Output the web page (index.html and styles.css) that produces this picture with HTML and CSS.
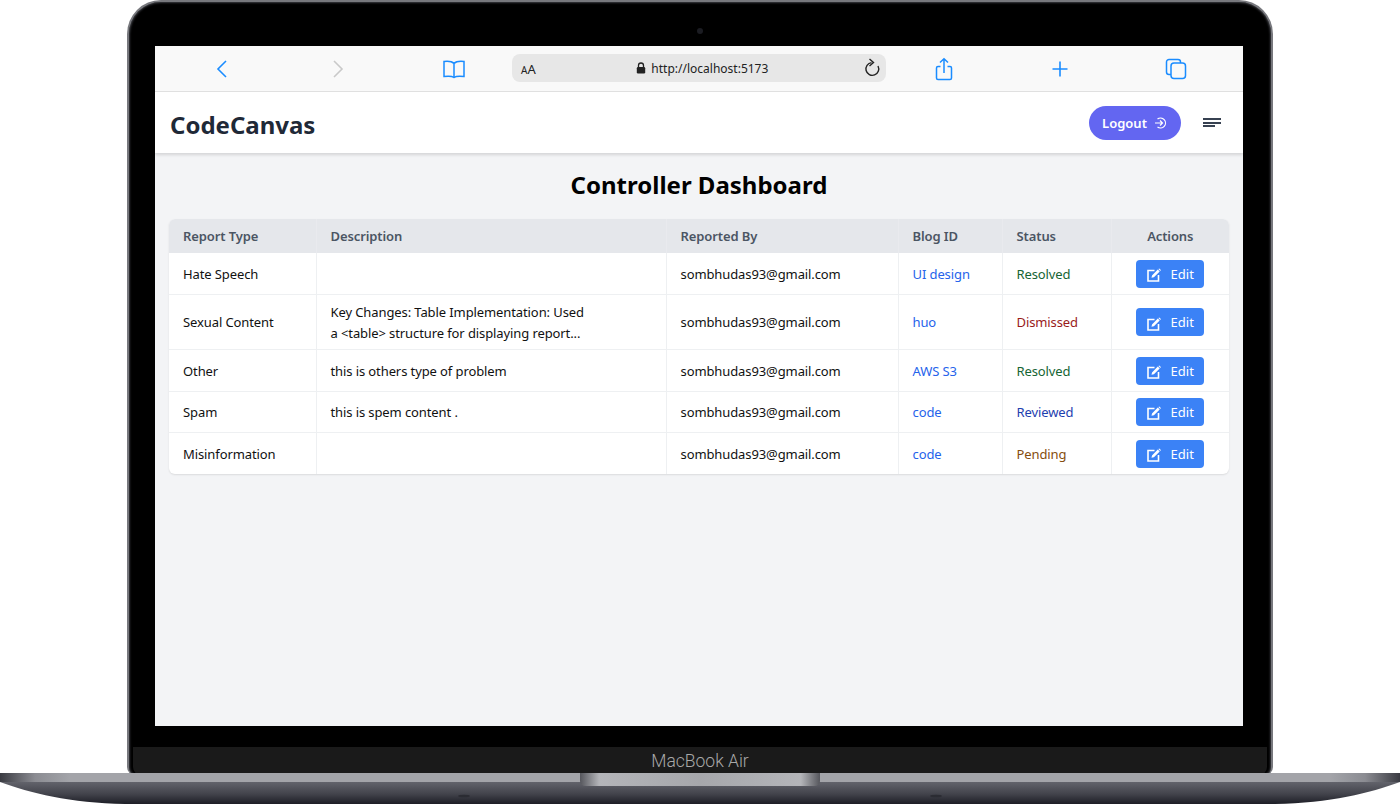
FILE: index.html
```html
<!DOCTYPE html>
<html lang="en">
  <head>
    <meta charset="UTF-8" />
    <meta name="viewport" content="width=device-width, initial-scale=1.0" />
    <title>Controller Dashboard</title>
    <link rel="stylesheet" href="styles.css">
  </head>
  <body>
    <div class="laptop">
      <div class="lid">
        <div class="camera"></div>
        <div class="chin">MacBook Air</div>
      </div>

      <svg class="base" width="1400" height="31" viewBox="0 0 1400 31">
        <defs>
          <linearGradient id="bodyGrad" x1="0" y1="0" x2="0" y2="1">
            <stop offset="0" stop-color="#62636b" />
            <stop offset="0.55" stop-color="#42434b" />
            <stop offset="1" stop-color="#1d1e26" />
          </linearGradient>
          <linearGradient id="bandGrad" x1="0" y1="0" x2="1" y2="0">
            <stop offset="0" stop-color="#3a3b42" />
            <stop offset="0.025" stop-color="#8b8c92" />
            <stop offset="0.05" stop-color="#a3a4a9" />
            <stop offset="0.95" stop-color="#a3a4a9" />
            <stop offset="0.975" stop-color="#8b8c92" />
            <stop offset="1" stop-color="#3a3b42" />
          </linearGradient>
          <linearGradient id="notchGrad" x1="0" y1="0" x2="1" y2="0">
            <stop offset="0" stop-color="#55565c" />
            <stop offset="0.08" stop-color="#b4b5b9" />
            <stop offset="0.5" stop-color="#a6a7ab" />
            <stop offset="0.92" stop-color="#b4b5b9" />
            <stop offset="1" stop-color="#55565c" />
          </linearGradient>
        </defs>
        <path d="M0 9 C30 20 70 30 125 31 L1275 31 C1330 30 1370 20 1400 9 Z" fill="url(#bodyGrad)" />
        <rect x="0" y="0" width="1400" height="9" fill="url(#bandGrad)" />
        <path d="M580 0 H820 V8 Q820 13 814 13 H586 Q580 13 580 8 Z" fill="url(#notchGrad)" />
        <ellipse cx="464" cy="23" rx="6" ry="1.3" fill="#2b2c33" />
        <ellipse cx="936" cy="23" rx="6" ry="1.3" fill="#2b2c33" />
      </svg>

      <div class="screen">
        <div class="toolbar">
          <div class="tool-slot">
            <svg width="24" height="24" viewBox="0 0 24 24" fill="none" stroke="#1a8cff" stroke-width="1.6"><path d="M16 4 L8 12 L16 20" /></svg>
          </div>
          <div class="tool-slot">
            <svg width="24" height="24" viewBox="0 0 24 24" fill="none" stroke="#c9c9c9" stroke-width="1.6"><path d="M8 4 L16 12 L8 20" /></svg>
          </div>
          <div class="tool-slot">
            <svg width="24" height="24" viewBox="0 0 24 24" fill="none" stroke="#1a8cff" stroke-width="1.5"><path d="M12 6.5 C10 4.5 6 4 2 4.5 V19.5 C6 19 10 19 12 20.5 C14 19 18 19 22 19.5 V4.5 C18 4 14 4.5 12 6.5 Z M12 6.5 V20.5" /></svg>
          </div>
          <div class="url-bar">
            <span class="aa"><small>A</small>A</span>
            <span class="url">
              <svg width="10" height="12" viewBox="0 0 10 12"><path d="M2.5 5 V3.5 a2.5 2.5 0 0 1 5 0 V5" fill="none" stroke="#222" stroke-width="1.3" /><rect x="0.8" y="5" width="8.4" height="6.5" rx="1.2" fill="#222" /></svg>
              http://localhost:5173
            </span>
            <svg class="reload" width="18" height="20" viewBox="0 0 18 20" fill="none" stroke="#222" stroke-width="1.4"><path d="M8.5 4.6 A6.4 6.4 0 1 0 15 8" /><path d="M6.5 1 L10.5 4.6 L6.5 8" /></svg>
          </div>
          <div class="tool-slot">
            <svg width="24" height="24" viewBox="0 0 24 24" fill="none" stroke="#1a8cff" stroke-width="1.5"><path d="M8.5 9.5 H6 a1.5 1.5 0 0 0 -1.5 1.5 V21 a1.5 1.5 0 0 0 1.5 1.5 H18 a1.5 1.5 0 0 0 1.5 -1.5 V11 a1.5 1.5 0 0 0 -1.5 -1.5 H15.5" /><path d="M12 16 V2 M8 5.5 L12 1.8 L16 5.5" /></svg>
          </div>
          <div class="tool-slot">
            <svg width="24" height="24" viewBox="0 0 24 24" fill="none" stroke="#1a8cff" stroke-width="1.6"><path d="M12 4.5 V19.5 M4.5 12 H19.5" /></svg>
          </div>
          <div class="tool-slot">
            <svg width="24" height="24" viewBox="0 0 24 24" fill="none" stroke="#1a8cff" stroke-width="1.5"><path d="M7 17.5 H5 a2.5 2.5 0 0 1 -2.5 -2.5 V5 a2.5 2.5 0 0 1 2.5 -2.5 H14 a2.5 2.5 0 0 1 2.5 2.5 V6" /><rect x="7" y="6" width="14.5" height="15.5" rx="3" /></svg>
          </div>
        </div>

        <nav class="navbar">
          <div class="brand">CodeCanvas</div>
          <div class="nav-right">
            <button class="logout-btn">
              Logout
              <svg width="14" height="14" viewBox="0 0 14 14" fill="none" stroke="#fff" stroke-width="1.2"><path d="M1 7 H8.5 M6 4.5 L8.5 7 L6 9.5" /><path d="M3.5 3 A5 5 0 1 1 3.5 11" /></svg>
            </button>
            <div class="menu-icon">
              <span></span>
              <span></span>
              <span class="short"></span>
            </div>
          </div>
        </nav>

        <main class="content">
          <h1>Controller Dashboard</h1>
          <div class="table-wrap">
            <table>
              <colgroup>
                <col class="col-type" />
                <col class="col-desc" />
                <col class="col-by" />
                <col class="col-blog" />
                <col class="col-status" />
                <col />
              </colgroup>
              <thead>
                <tr>
                  <th>Report Type</th>
                  <th>Description</th>
                  <th>Reported By</th>
                  <th>Blog ID</th>
                  <th>Status</th>
                  <th class="center">Actions</th>
                </tr>
              </thead>
              <tbody>
                <tr>
                  <td>Hate Speech</td>
                  <td></td>
                  <td>sombhudas93@gmail.com</td>
                  <td class="blog">UI design</td>
                  <td class="resolved">Resolved</td>
                  <td class="center"><button class="edit-btn"><svg width="14" height="14" viewBox="0 0 14 14"><path d="M7.5 2.5 H1 V13 H11.5 V7" fill="none" stroke="#fff" stroke-width="1.6" /><path d="M4.5 9.8 L5 7.4 L10.8 1.6 L12.7 3.5 L6.9 9.3 Z M11.4 1 L12.2 0.4 L13.9 2 L13.3 2.9 Z" fill="#fff" /></svg>Edit</button></td>
                </tr>
                <tr>
                  <td>Sexual Content</td>
                  <td class="desc">Key Changes: Table Implementation: Used a &lt;table&gt; structure for displaying report...</td>
                  <td>sombhudas93@gmail.com</td>
                  <td class="blog">huo</td>
                  <td class="dismissed">Dismissed</td>
                  <td class="center"><button class="edit-btn"><svg width="14" height="14" viewBox="0 0 14 14"><path d="M7.5 2.5 H1 V13 H11.5 V7" fill="none" stroke="#fff" stroke-width="1.6" /><path d="M4.5 9.8 L5 7.4 L10.8 1.6 L12.7 3.5 L6.9 9.3 Z M11.4 1 L12.2 0.4 L13.9 2 L13.3 2.9 Z" fill="#fff" /></svg>Edit</button></td>
                </tr>
                <tr>
                  <td>Other</td>
                  <td>this is others type of problem</td>
                  <td>sombhudas93@gmail.com</td>
                  <td class="blog">AWS S3</td>
                  <td class="resolved">Resolved</td>
                  <td class="center"><button class="edit-btn"><svg width="14" height="14" viewBox="0 0 14 14"><path d="M7.5 2.5 H1 V13 H11.5 V7" fill="none" stroke="#fff" stroke-width="1.6" /><path d="M4.5 9.8 L5 7.4 L10.8 1.6 L12.7 3.5 L6.9 9.3 Z M11.4 1 L12.2 0.4 L13.9 2 L13.3 2.9 Z" fill="#fff" /></svg>Edit</button></td>
                </tr>
                <tr>
                  <td>Spam</td>
                  <td>this is spem content .</td>
                  <td>sombhudas93@gmail.com</td>
                  <td class="blog">code</td>
                  <td class="reviewed">Reviewed</td>
                  <td class="center"><button class="edit-btn"><svg width="14" height="14" viewBox="0 0 14 14"><path d="M7.5 2.5 H1 V13 H11.5 V7" fill="none" stroke="#fff" stroke-width="1.6" /><path d="M4.5 9.8 L5 7.4 L10.8 1.6 L12.7 3.5 L6.9 9.3 Z M11.4 1 L12.2 0.4 L13.9 2 L13.3 2.9 Z" fill="#fff" /></svg>Edit</button></td>
                </tr>
                <tr>
                  <td>Misinformation</td>
                  <td></td>
                  <td>sombhudas93@gmail.com</td>
                  <td class="blog">code</td>
                  <td class="pending">Pending</td>
                  <td class="center"><button class="edit-btn"><svg width="14" height="14" viewBox="0 0 14 14"><path d="M7.5 2.5 H1 V13 H11.5 V7" fill="none" stroke="#fff" stroke-width="1.6" /><path d="M4.5 9.8 L5 7.4 L10.8 1.6 L12.7 3.5 L6.9 9.3 Z M11.4 1 L12.2 0.4 L13.9 2 L13.3 2.9 Z" fill="#fff" /></svg>Edit</button></td>
                </tr>
              </tbody>
            </table>
          </div>
        </main>
      </div>
    </div>
  </body>
</html>
```

FILE: styles.css
```css
* {
  box-sizing: border-box;
}

body {
  margin: 0;
  background: #fff;
  font-family: "Noto Sans", "Open Sans", sans-serif;
  overflow: hidden;
}

.laptop {
  position: relative;
  width: 1400px;
  height: 804px;
}

/* the laptop parts sit on a free canvas */
.lid {
  position: absolute;
  left: 127px;
  top: 0;
  width: 1146px;
  height: 775px;
  background: #000;
  border: 2px solid #77787d;
  border-bottom: 0;
  border-radius: 34px 34px 8px 8px;
  box-shadow: inset 0 0 2px 1px #3a3b40;
}

.camera {
  position: absolute;
  left: 568px;
  top: 26px;
  width: 6px;
  height: 6px;
  border-radius: 50%;
  background: #1b1c22;
}

.chin {
  position: absolute;
  left: 4px;
  right: 4px;
  bottom: 0;
  height: 28px;
  background: #1a1a1a;
  border-radius: 0 0 8px 8px;
  color: #a8a8a8;
  font-family: Roboto, "Liberation Sans", sans-serif;
  font-size: 17.5px;
  font-weight: 300;
  line-height: 28px;
  text-align: center;
}

.base {
  position: absolute;
  left: 0;
  top: 773px;
}

.screen {
  position: absolute;
  left: 155px;
  top: 46px;
  width: 1088px;
  height: 680px;
  background: #f3f4f6;
  display: flex;
  flex-direction: column;
}

.toolbar {
  display: flex;
  align-items: center;
  height: 46px;
  padding-left: 9px;
  background: #f9f9f9;
  border-bottom: 1px solid #e1e1e1;
  flex-shrink: 0;
}

.tool-slot {
  width: 116px;
  display: flex;
  justify-content: center;
}

.url-bar {
  width: 374px;
  height: 28px;
  margin-top: -1px;
  padding: 0 5px 0 9px;
  display: flex;
  align-items: center;
  justify-content: space-between;
  background: #e7e7e7;
  border-radius: 8px;
  color: #222;
  font-size: 12px;
}

.aa {
  font-size: 13px;
  margin: 2px 6px 0 0;
}

.aa small {
  font-size: 10px;
}

.url {
  display: flex;
  align-items: center;
  gap: 5px;
}

.navbar {
  display: flex;
  align-items: center;
  justify-content: space-between;
  height: 61px;
  padding: 0 22px 0 15px;
  background: #fff;
  box-shadow: 0 2px 3px rgba(0, 0, 0, 0.13);
  flex-shrink: 0;
}

.brand {
  margin-top: 3px;
  color: #1f2937;
  font-size: 24px;
  font-weight: 700;
}

.nav-right {
  display: flex;
  align-items: center;
  gap: 22px;
}

.logout-btn {
  display: flex;
  align-items: center;
  justify-content: center;
  gap: 7px;
  width: 92px;
  height: 34px;
  border: 0;
  border-radius: 17px;
  background: #6366f1;
  color: #fff;
  font-family: inherit;
  font-size: 13px;
  font-weight: 600;
}

.menu-icon {
  width: 18px;
}

.menu-icon span {
  display: block;
  height: 2px;
  margin: 1.5px 0;
  background: #374151;
}

.menu-icon .short {
  width: 12px;
}

.content {
  padding: 14px 14px 0;
}

h1 {
  margin: 0 0 16px;
  color: #000;
  font-size: 24px;
  font-weight: 700;
  line-height: 36px;
  text-align: center;
}

.table-wrap {
  background: #fff;
  border-radius: 6px;
  overflow: hidden;
  box-shadow: 0 1px 2px rgba(0, 0, 0, 0.1);
}

table {
  width: 100%;
  border-collapse: collapse;
  table-layout: fixed;
  font-size: 13px;
  letter-spacing: -0.1px;
  color: #111;
}

.col-type {
  width: 147px;
}

.col-desc {
  width: 350px;
}

.col-by {
  width: 232px;
}

.col-blog {
  width: 104px;
}

.col-status {
  width: 109px;
}

th {
  height: 34px;
  padding: 0 14px;
  background: #e5e7eb;
  border-left: 1px solid #e9eaee;
  color: #4b5563;
  font-weight: 600;
  text-align: left;
}

td {
  height: 41px;
  padding: 1px 14px 0;
  border-top: 1px solid #eef0f2;
  border-left: 1px solid #eef0f2;
}

tbody tr:nth-child(3) td,
tbody tr:nth-child(5) td {
  height: 42px;
}

tbody tr:nth-child(4) td {
  padding-top: 0;
}

th:first-child,
td:first-child {
  border-left: 0;
}

tbody tr:first-child td {
  border-top: 0;
}

td.desc {
  padding: 7px 80px 5px 14px;
  line-height: 21px;
}

.center {
  text-align: center;
}

.blog {
  color: #2563eb;
}

.resolved {
  color: #166534;
}

.dismissed {
  color: #991b1b;
}

.reviewed {
  color: #1e40af;
}

.pending {
  color: #854d0e;
}

.edit-btn {
  display: inline-flex;
  align-items: center;
  justify-content: center;
  gap: 10px;
  width: 68px;
  height: 28px;
  vertical-align: middle;
  border: 0;
  border-radius: 4px;
  background: #3b82f6;
  color: #fff;
  font-family: inherit;
  font-size: 13px;
}

.edit-btn svg {
  margin-top: 3px;
}
```
